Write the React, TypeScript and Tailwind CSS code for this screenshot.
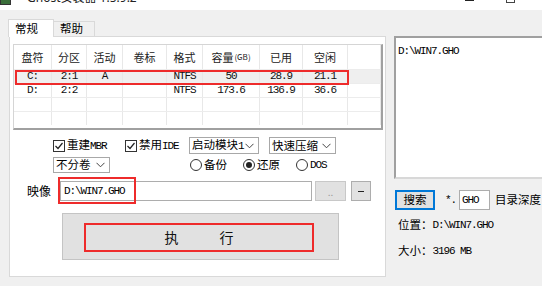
import React from "react";

const Check = () => (
  <div className="w-[12px] h-[12px] border border-[#333] bg-white flex items-center justify-center shrink-0">
    <svg width="10" height="10" viewBox="0 0 10 10">
      <path d="M1.5 5 L4 7.5 L8.5 2" fill="none" stroke="#222" strokeWidth="1.2" />
    </svg>
  </div>
);

const Chevron = () => (
  <svg width="9" height="6" viewBox="0 0 9 6" className="shrink-0">
    <path d="M0.5 0.8 L4.5 4.8 L8.5 0.8" fill="none" stroke="#444" strokeWidth="1" />
  </svg>
);

const Radio = ({ on }: { on?: boolean }) => (
  <div className="w-[12px] h-[12px] rounded-full border border-[#333] bg-white flex items-center justify-center shrink-0">
    {on && <div className="w-[6px] h-[6px] rounded-full bg-[#222]" />}
  </div>
);

const mono = "[font-family:'Liberation_Mono','Noto_Sans_CJK_SC',monospace] text-[11px] tracking-[-1.1px]";

const cols = [
  { w: "w-[38px]", h: "盘符" },
  { w: "w-[35px]", h: "分区" },
  { w: "w-[36px]", h: "活动" },
  { w: "w-[44px]", h: "卷标" },
  { w: "w-[36px]", h: "格式" },
  { w: "w-[57px]", h: "容量" },
  { w: "w-[43px]", h: "已用" },
  { w: "w-[45px]", h: "空闲" },
  { w: "w-[33px]", h: "" },
];

const rows = [
  ["C:", "2:1", "A", "", "NTFS", "50", "28.9", "21.1", ""],
  ["D:", "2:2", "", "", "NTFS", "173.6", "136.9", "36.6", ""],
  ["", "", "", "", "", "", "", "", ""],
  ["", "", "", "", "", "", "", "", ""],
];

export default function App() {
  return (
    <div className="w-[542px] h-[286px] overflow-hidden bg-[#f0f0f0] [font-family:'Noto_Sans_CJK_SC',sans-serif] text-[12px] text-black flex flex-col">
      {/* title bar (cut off) */}
      <div className="h-[24px] -mt-[14px] bg-white flex items-center shrink-0 relative">
        <div className="w-[11px] h-[14px] bg-[#3a6e3a] border border-[#333] shrink-0" />
        <div className="ml-[16px] text-[12px] leading-[16px] [font-family:'Noto_Sans','Noto_Sans_CJK_SC',sans-serif] text-[#222]">
          Ghost安装器 1.5.9.2
        </div>
        <div className="flex-1" />
        <div className="self-start mt-[14px] w-[9px] h-[1px] bg-[#222]" />
        <div className="self-start mt-[7px] ml-[32px] w-[9px] h-[10px] border border-[#444]" />
        <div className="w-[27px]" />
      </div>

      <div className="flex flex-1 min-h-0">
        {/* left tab control */}
        <div className="ml-[9px] w-[377px] shrink-0 flex flex-col">
          <div className="h-[26px] flex items-end">
            <div className="-ml-[1px] w-[46px] h-[18px] -mb-px bg-white border border-b-0 border-[#d9d9d9] relative z-10 flex items-center pl-[6px] text-[11.5px] leading-none">
              常规
            </div>
            <div className="w-[41px] h-[15px] border border-l-0 border-b-0 border-[#d9d9d9] bg-[#f0f0f0] flex items-center pl-[6px] text-[11.5px] leading-none">
              帮助
            </div>
          </div>
          <div className="h-[241px] bg-white border border-[#d9d9d9] flex flex-col">
            {/* list */}
            <div className="mt-[7px] ml-[3px] w-[370px] h-[86px] border-t border-l border-[#d5d5d5] border-r-2 border-b-2 border-r-[#a0a0a0] border-b-[#a0a0a0] overflow-hidden relative bg-white">
              <div className="flex h-[24px]">
                {cols.map((c, i) => (
                  <div key={i} className={`${c.w} shrink-0 border-r border-[#e8e8e8] flex items-center justify-center text-[11px] text-[#222]`}>
                    {c.h}
                    {i === 5 && <span className="text-[8px] ml-px">(GB)</span>}
                  </div>
                ))}
              </div>
              {rows.map((r, ri) => (
                <div key={ri} className={`flex h-[14px] border-t border-[#ececec] ${ri === 0 ? "bg-[#efefef]" : ""}`}>
                  {r.map((v, ci) => (
                    <div key={ci} className={`${cols[ci].w} shrink-0 border-r border-[#e8e8e8] flex items-center justify-center ${mono} text-[#111]`}>
                      {v}
                    </div>
                  ))}
                </div>
              ))}
              <div className="absolute left-[1px] top-[25px] w-[334px] h-[15px] border-2 border-[#ee2b2b]" />
            </div>

            {/* options row 1 */}
            <div className="mt-[7px] h-[17px] flex items-center">
              <div className="ml-[43px] w-[72px] flex items-center">
                <Check />
                <span className="ml-[2px] text-[11.5px] leading-none">重建<span className={mono}>MBR</span></span>
              </div>
              <div className="w-[64px] flex items-center">
                <Check />
                <span className="ml-[2px] text-[11.5px] leading-none">禁用<span className={mono}>IDE</span></span>
              </div>
              <div className="w-[70px] h-[17px] border border-[#a8a8a8] bg-white flex items-center justify-between pl-[2px] pr-[4px]">
                <span className="text-[11.5px] leading-none">启动模块<span className={mono}>1</span></span>
                <Chevron />
              </div>
              <div className="ml-[10px] w-[67px] h-[17px] border border-[#a8a8a8] bg-white flex items-center justify-between pl-[2px] pr-[4px]">
                <span className="text-[11.5px] leading-none">快速压缩</span>
                <Chevron />
              </div>
            </div>

            {/* options row 2 */}
            <div className="mt-[3px] h-[16px] flex items-center">
              <div className="ml-[43px] w-[57px] h-[16px] border border-[#a8a8a8] bg-white flex items-center justify-between pl-[2px] pr-[4px]">
                <span className="text-[11.5px] leading-none">不分卷</span>
                <Chevron />
              </div>
              <div className="ml-[80px] w-[53px] flex items-center">
                <Radio />
                <span className="ml-[2px] text-[11.5px] leading-none">备份</span>
              </div>
              <div className="w-[53px] flex items-center">
                <Radio on />
                <span className="ml-[2px] text-[11.5px] leading-none">还原</span>
              </div>
              <div className="flex items-center">
                <Radio />
                <span className={`ml-[2px] ${mono}`}>DOS</span>
              </div>
            </div>

            {/* image row */}
            <div className="mt-[8px] h-[20px] flex items-center">
              <div className="ml-[17px] w-[33px] text-[12px] leading-none">映像</div>
              <div className="w-[252px] h-[20px] border border-[#adadad] bg-white flex items-center pl-[3px] relative">
                <span className={mono}>D:\WIN7.GHO</span>
                <div className="absolute -left-[3px] -top-[5px] w-[78px] h-[27px] border-2 border-[#ee2b2b]" />
              </div>
              <div className="ml-[3px] w-[31px] h-[20px] border border-[#c8c8c8] bg-[#e1e1e1] flex items-center justify-center text-[10px] text-[#999]">
                ..
              </div>
              <div className="ml-[5px] w-[20px] h-[20px] border border-[#adadad] bg-[#e1e1e1] flex items-center justify-center">
                <div className="w-[6px] h-px bg-[#222]" />
              </div>
            </div>

            {/* execute */}
            <div className="mt-[12px] ml-[52px] w-[277px] h-[47px] bg-[#e1e1e1] border border-[#c4c4c4] pt-[9px] pl-[21px]">
              <div className="w-[230px] h-[29px] border-2 border-[#ee2b2b] flex items-center justify-center text-[14px] text-[#111]">
                <span>执</span>
                <span className="ml-[41px]">行</span>
              </div>
            </div>
          </div>
        </div>

        {/* right column */}
        <div className="ml-[8px] w-[180px] shrink-0 flex flex-col">
          <div className="mt-[26px] w-[160px] h-[143px] bg-white border-2 border-t-[#a0a0a0] border-l-[#a0a0a0] border-r-[#e3e3e3] border-b-[#d8d8d8] pl-[2px] pt-[2px]">
            <span className={`${mono} leading-[12px]`}>D:\WIN7.GHO</span>
          </div>
          <div className="mt-[11px] h-[20px] flex items-center">
            <div className="ml-[1px] w-[40px] h-[20px] border-2 border-[#0078d7] bg-[#e1e1e1] flex items-center justify-center text-[11.5px]">
              搜索
            </div>
            <span className={`ml-[10px] ${mono}`}>*.</span>
            <div className="ml-[3px] w-[31px] h-[20px] border border-[#adadad] bg-white flex items-center pl-[2px]">
              <span className={mono}>GHO</span>
            </div>
            <span className="ml-[5px] text-[11.5px] leading-none whitespace-nowrap">目录深度</span>
            <div className="ml-[3px] w-[30px] h-[20px] border border-[#adadad] bg-white shrink-0" />
          </div>
          <div className="mt-[7px] h-[16px] ml-[4px] flex items-center whitespace-nowrap">
            <span className="text-[11.5px]">位置：</span>
            <span className={mono}>D:\WIN7.GHO</span>
          </div>
          <div className="mt-[10px] h-[16px] ml-[4px] flex items-center whitespace-nowrap">
            <span className="text-[11.5px]">大小：</span>
            <span className={mono}>3196 MB</span>
          </div>
        </div>
      </div>
    </div>
  );
}
